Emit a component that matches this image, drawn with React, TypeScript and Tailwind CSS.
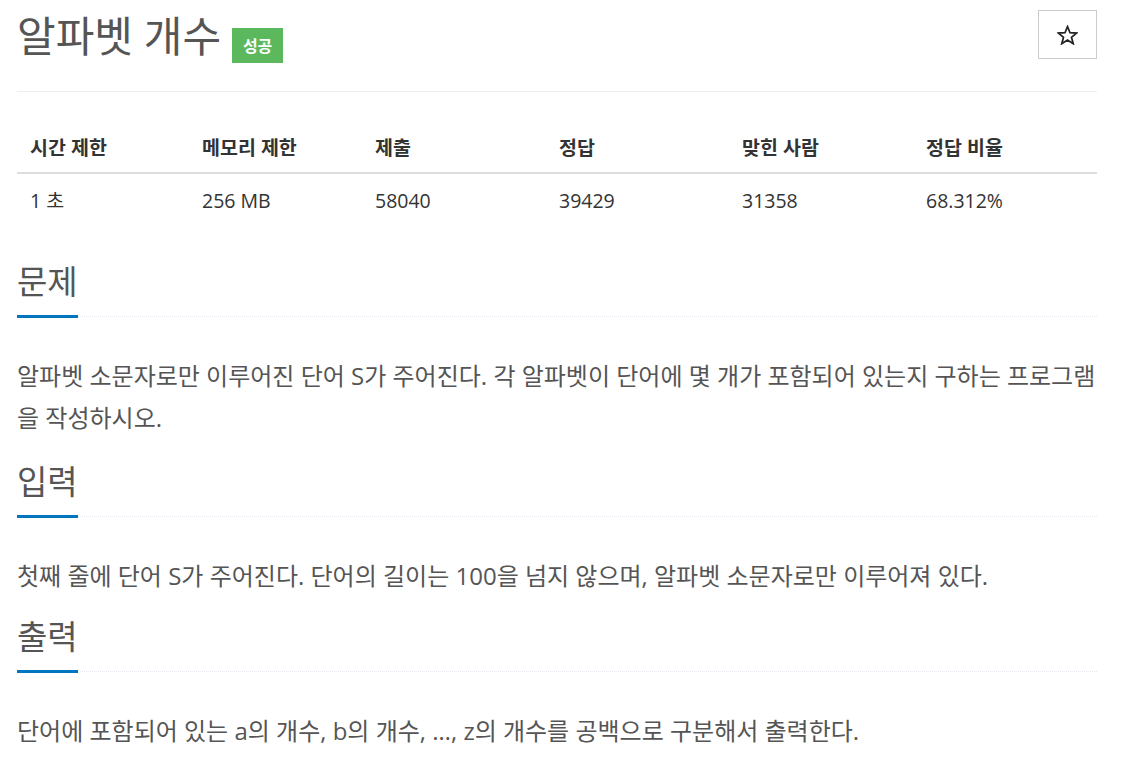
const font = { fontFamily: '"Open Sans", "Noto Sans CJK KR", sans-serif' };

const stats = [
  { label: "시간 제한", value: "1 초" },
  { label: "메모리 제한", value: "256 MB" },
  { label: "제출", value: "58040" },
  { label: "정답", value: "39429" },
  { label: "맞힌 사람", value: "31358" },
  { label: "정답 비율", value: "68.312%" },
];

const sections = [
  {
    title: "문제",
    gap: "mt-[32px]",
    body: "알파벳 소문자로만 이루어진 단어 S가 주어진다. 각 알파벳이 단어에 몇 개가 포함되어 있는지 구하는 프로그램을 작성하시오.",
  },
  {
    title: "입력",
    gap: "mt-[19px]",
    body: "첫째 줄에 단어 S가 주어진다. 단어의 길이는 100을 넘지 않으며, 알파벳 소문자로만 이루어져 있다.",
  },
  {
    title: "출력",
    gap: "mt-[16px]",
    body: "단어에 포함되어 있는 a의 개수, b의 개수, …, z의 개수를 공백으로 구분해서 출력한다.",
  },
];

function StarIcon() {
  return (
    <svg width="21" height="20" viewBox="0 0 24 23" fill="none" stroke="#222" strokeWidth="2" strokeLinejoin="miter">
      <path d="M12 1.8l2.9 7.1 7.6.4-5.9 4.8 2 7.4L12 17.3l-6.6 4.2 2-7.4-5.9-4.8 7.6-.4z" />
    </svg>
  );
}

export default function App() {
  return (
    <div className="min-h-screen bg-white" style={font}>
      <div className="ml-[17px] w-[1080px]">
        {/* title */}
        <div className="flex h-[92px] justify-between border-b border-[#eeeeee] pt-[10px]">
          <div className="flex items-start">
            <h1 className="text-[42px] font-normal leading-[52px] text-[#555555]">알파벳 개수</h1>
            <span className="ml-[11px] mt-[18px] flex h-[35px] w-[51px] items-center justify-center bg-[#5cb85c] text-[16px] font-semibold text-white">
              성공
            </span>
          </div>
          <button className="flex h-[49px] w-[59px] items-center justify-center border border-[#cccccc] bg-white">
            <StarIcon />
          </button>
        </div>

        {/* stats table */}
        <div className="mt-[30px] grid grid-cols-[172px_173px_184px_183px_184px_1fr] text-[19.5px] text-[#333333]">
          {stats.map((s) => (
            <div key={s.label} className="flex h-[52px] items-center border-b-2 border-[#dddddd] pl-[13px] pt-[2px] font-bold">
              {s.label}
            </div>
          ))}
          {stats.map((s) => (
            <div key={s.value} className="flex h-[52px] items-center pl-[13px] pt-[2px]">
              {s.value}
            </div>
          ))}
        </div>

        {sections.map((sec) => (
          <div key={sec.title} className={sec.gap}>
            <div className="border-b border-dotted border-[#e4e9f0]">
              <h2 className="mb-[-2px] inline-block w-[61px] border-b-[3px] border-[#0076c0] pb-[9px] text-[33px] font-normal leading-[48px] text-[#555555]">
                {sec.title}
              </h2>
            </div>
            <p className="mt-[38px] text-[24px] leading-[42px] text-[#555555]">{sec.body}</p>
          </div>
        ))}
      </div>
    </div>
  );
}
